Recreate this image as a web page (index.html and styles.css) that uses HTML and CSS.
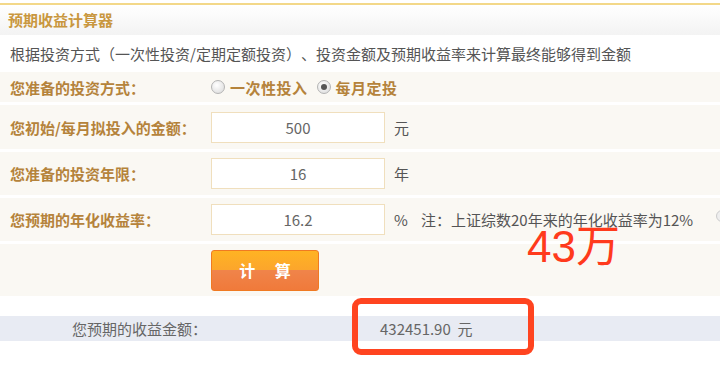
FILE: index.html
```html
<!DOCTYPE html>
<html lang="zh-CN">
  <head>
    <meta charset="UTF-8" />
    <title>预期收益计算器</title>
    <link rel="stylesheet" href="styles.css">
  </head>
  <body>
    <div class="calc">
      <div class="head">预期收益计算器</div>
      <div class="desc">根据投资方式（一次性投资/定期定额投资）、投资金额及预期收益率来计算最终能够得到金额</div>
      <div class="form">
        <div class="row row-radio">
          <div class="label">您准备的投资方式：</div>
          <div class="value">
            <span class="radio"></span><span class="radio-text">一次性投入</span>
            <span class="radio checked"></span><span class="radio-text">每月定投</span>
          </div>
        </div>
        <div class="row row-tall">
          <div class="label">您初始/每月拟投入的金额：</div>
          <div class="value">
            <div class="input">500</div>
            <span class="unit">元</span>
          </div>
        </div>
        <div class="row">
          <div class="label">您准备的投资年限：</div>
          <div class="value">
            <div class="input">16</div>
            <span class="unit">年</span>
          </div>
        </div>
        <div class="row">
          <div class="label">您预期的年化收益率：</div>
          <div class="value">
            <div class="input">16.2</div>
            <span class="unit">%</span>
            <span class="note">注：上证综数20年来的年化收益率为12%</span>
          </div>
        </div>
        <div class="row row-btn">
          <div class="label"></div>
          <div class="value">
            <div class="btn">计 算</div>
          </div>
        </div>
      </div>
      <div class="result">
        <div class="result-label">您预期的收益金额：</div>
        <div class="result-value">432451.90&nbsp;&nbsp;元</div>
      </div>

      <div class="mark-text">43万</div>
      <div class="mark-box"></div>
      <span class="edge"></span>
    </div>
  </body>
</html>
```

FILE: styles.css
```css
* {
  margin: 0;
  padding: 0;
  box-sizing: border-box;
}
body {
  background: #fff;
  font-family: "Noto Sans CJK SC", "Liberation Sans", sans-serif;
  color: #555;
  text-spacing-trim: space-all;
}
.calc {
  position: relative;
  width: 720px;
  height: 383px;
  padding-top: 3px;
  overflow: hidden;
}

.head {
  height: 32px;
  border-top: 2px solid #f3d889;
  background: linear-gradient(#fff, #f3f3f3);
  padding-left: 8px;
  line-height: 30px;
  font-size: 15px;
  font-weight: bold;
  color: #c9973f;
}

.desc {
  height: 37px;
  line-height: 37px;
  padding-left: 10px;
  font-size: 15px;
  color: #555;
  background: #fff;
}

.form {
  background: #faf8f3;
}
.row {
  display: flex;
  align-items: center;
  height: 46px;
  border-bottom: 3px solid #fff;
}
.row-radio {
  height: 33px;
}
.row-tall {
  height: 47px;
}
.row-btn {
  height: 52px;
  border-bottom: none;
}
.label {
  width: 211px;
  padding-left: 10px;
  font-size: 15px;
  font-weight: bold;
  color: #b5833b;
}
.value {
  display: flex;
  align-items: center;
}

.radio {
  width: 14px;
  height: 14px;
  border-radius: 50%;
  border: 1px solid #b4b4b4;
  background: radial-gradient(circle at 40% 35%, #fff, #d8d8d8);
  margin-right: 5px;
  position: relative;
}
.radio.checked::after {
  content: "";
  position: absolute;
  left: 3px;
  top: 3px;
  width: 6px;
  height: 6px;
  border-radius: 50%;
  background: #555;
}
.radio-text {
  font-size: 15px;
  font-weight: bold;
  color: #b5833b;
  margin-right: 9px;
  letter-spacing: 0.5px;
}

.input {
  width: 174px;
  height: 31px;
  border: 1px solid #f0dfbd;
  background: #fff;
  text-align: center;
  line-height: 29px;
  font-size: 15px;
  color: #666;
}
.unit {
  margin-left: 9px;
  font-size: 15px;
  color: #555;
  width: 18px;
}
.note {
  margin-left: 9px;
  font-size: 15px;
  color: #555;
}

.btn {
  width: 108px;
  height: 41px;
  border: 1px solid #f07a22;
  border-radius: 3px;
  background: linear-gradient(#ffb323, #fca52c 50%, #f0844a 50%, #f07a3a);
  text-align: center;
  line-height: 39px;
  font-size: 16px;
  font-weight: bold;
  color: #fff;
  letter-spacing: 8px;
  padding-left: 8px;
}

.result {
  display: flex;
  align-items: center;
  height: 25px;
  margin-top: 20px;
  background: #e8ebf3;
  font-size: 15px;
  color: #666;
}
.result-label {
  width: 207px;
  text-align: right;
}
.result-value {
  padding-left: 173px;
}

.mark-text {
  position: absolute;
  left: 527px;
  top: 227px;
  font-family: "Liberation Sans", "Noto Sans CJK SC", sans-serif;
  font-size: 44px;
  line-height: 40px;
  color: #ff3a1c;
}
.mark-box {
  position: absolute;
  left: 352px;
  top: 298px;
  width: 182px;
  height: 57px;
  border: 6px solid #ff4420;
  border-radius: 9px;
}
.edge {
  position: absolute;
  left: 716px;
  top: 210px;
  width: 12px;
  height: 12px;
  border-radius: 50%;
  border: 1px solid #ccc;
  background: #eee;
}
```
